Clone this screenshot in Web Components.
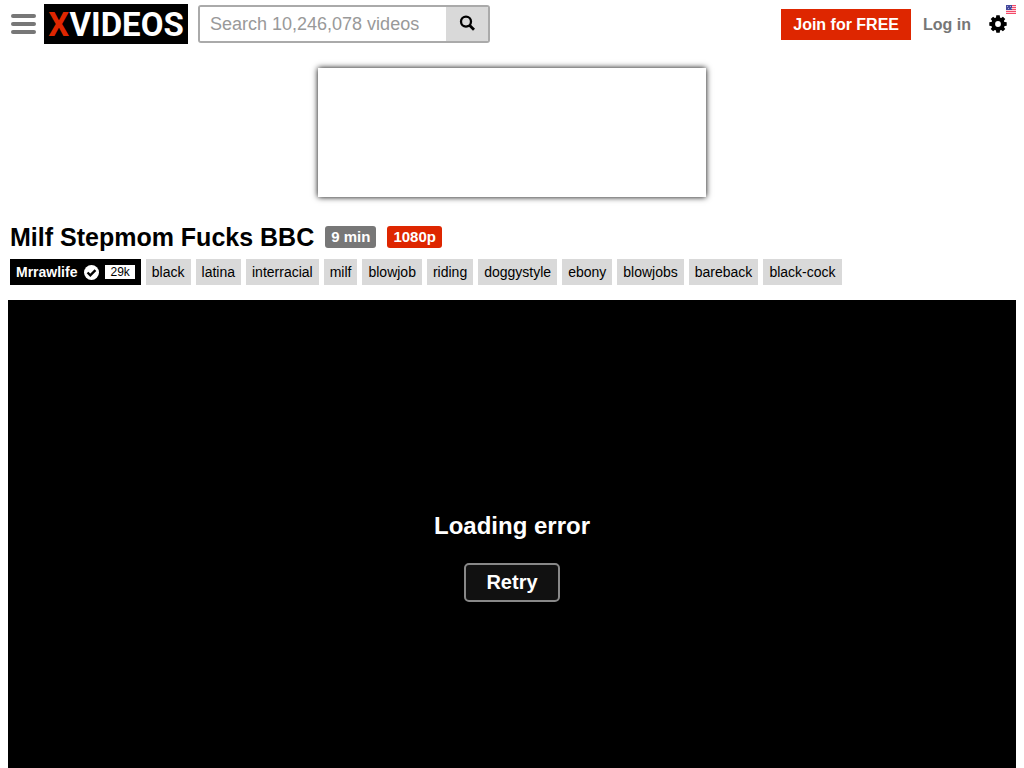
<!DOCTYPE html>
<html lang="en">
<head>
<meta charset="utf-8">
<meta name="viewport" content="width=device-width, initial-scale=1">
<title>Video page</title>
<style>
  body { margin: 0; background: #fff; color: #000; font-family: "Liberation Sans", Arial, sans-serif; }
</style>
</head>
<body>
<video-page></video-page>
<script>
const define = (name, html) => {
  const template = document.createElement("template");
  template.innerHTML = html;
  customElements.define(name, class extends HTMLElement {
    constructor() {
      super();
      this.attachShadow({ mode: "open" }).append(template.content.cloneNode(true));
    }
  });
};

define("site-logo", `
  <style>
    :host { display: block; }
    a { display: block; box-sizing: border-box; width: 144px; height: 40px; background: #000; color: #fff;
        font: bold 33px/42px Roboto, sans-serif; text-align: center; text-decoration: none; white-space: nowrap; }
    span { color: #de2600; }
  </style>
  <a href="#"><span>X</span>VIDEOS</a>`);

define("search-box", `
  <style>
    :host { display: block; }
    form { display: flex; box-sizing: border-box; width: 292px; height: 38px; border: 2px solid #aaa; border-radius: 3px; overflow: hidden; }
    input { flex: 1; min-width: 0; border: 0; padding: 0 10px; background: #fff; outline: 0; font: 18px "Liberation Sans", Arial, sans-serif; }
    input::placeholder { color: #999; opacity: 1; }
    button { display: flex; align-items: center; justify-content: center; width: 42px; border: 0; padding: 0 0 2px; background: #d9d9d9; }
  </style>
  <form>
    <input type="text" aria-label="Search" placeholder="Search 10,246,078 videos">
    <button type="button" aria-label="Search">
      <svg width="16" height="16" viewBox="0 0 16 16" fill="none" stroke="#000"><circle cx="7" cy="6.6" r="5" stroke-width="2.3"/><path d="M10.5 10.2 15 14.8" stroke-width="2.8"/></svg>
    </button>
  </form>`);

define("settings-menu", `
  <style>
    :host { display: block; position: relative; }
    button { display: block; border: 0; padding: 0; background: none; }
    svg { display: block; }
    .flag { position: absolute; top: -10px; right: -9px; }
  </style>
  <button type="button" aria-label="Settings">
    <svg width="18" height="18" viewBox="0 0 18 18">
      <path fill-rule="evenodd" d="M9 2.2a6.8 6.8 0 1 1 0 13.6A6.8 6.8 0 0 1 9 2.2Zm0 3.9a2.9 2.9 0 1 0 0 5.8 2.9 2.9 0 0 0 0-5.8Z"/>
      <path d="M7.3 .3h3.4l.5 3.5H6.8ZM7.3 17.7h3.4l.5-3.5H6.8ZM.3 7.3v3.4l3.5.5V6.8ZM17.7 7.3v3.4l-3.5.5V6.8ZM1.7 4.1l2.4-2.4 2.7 2.1-3 3ZM16.3 4.1l-2.4-2.4-2.7 2.1 3 3ZM1.7 13.9l2.4 2.4 2.7-2.1-3-3ZM16.3 13.9l-2.4 2.4-2.7-2.1 3-3Z"/>
    </svg>
  </button>
  <svg class="flag" width="10" height="9" viewBox="0 0 10 9"><path fill="#ffd5df" d="M0 0h10v9H0z"/><path fill="#f34b68" d="M0 0h10v1H0zM0 2h10v1H0zM0 4h10v1H0zM0 6h10v1H0zM0 8h10v1H0z"/><path fill="#454a9c" d="M0 0h6v5H0z"/><path fill="#a6a9d8" d="M1 1h1v1H1zM4 1h1v1H4zM2 3h1v1H2zM5 3h1v1H5z"/></svg>`);

define("site-header", `
  <style>
    :host { display: flex; align-items: center; height: 40px; padding: 4px 17px 4px 11px; }
    .menu { display: flex; flex-direction: column; gap: 4px; width: 25px; margin-right: 8px; border: 0; padding: 0; background: none; }
    .menu i { height: 4px; border-radius: 2px; background: #777; }
    search-box { margin-left: 10px; }
    nav { display: flex; align-items: center; margin-left: auto; font-size: 16px; font-weight: bold; line-height: 31px; white-space: nowrap; }
    a { text-decoration: none; color: #777; }
    .join { padding: 0 12px; background: #de2600; color: #fff; }
    .login { margin: 0 18px 0 12px; }
  </style>
  <button class="menu" type="button" aria-label="Menu"><i></i><i></i><i></i></button>
  <site-logo></site-logo>
  <search-box></search-box>
  <nav><a class="join" href="#">Join for FREE</a><a class="login" href="#">Log in</a><settings-menu></settings-menu></nav>`);

define("promo-frame", `
  <style>
    :host { display: block; width: 388px; max-width: 90%; height: 129px; margin: 20px auto 0; background: #fff; box-shadow: 0 0 6px #000; }
  </style>`);

define("title-badge", `
  <style>
    :host { display: block; padding: 0 6px; border-radius: 3px; background: var(--badge, #777); color: #fff; font-size: 15px; font-weight: bold; line-height: 22px; }
  </style>
  <slot></slot>`);

define("video-title", `
  <style>
    :host { display: flex; flex-wrap: wrap; align-items: center; gap: 11px; margin: 25px 10px 0; }
    h1 { margin: 0; font-size: 25px; line-height: 30px; }
    .quality { --badge: #de2600; }
  </style>
  <h1>Milf Stepmom Fucks BBC</h1>
  <title-badge>9 min</title-badge>
  <title-badge class="quality">1080p</title-badge>`);

define("tag-link", `
  <style>
    :host { display: block; }
    a { display: block; padding: 0 6px; background: #d9d9d9; color: #000; font-size: 14px; line-height: 26px; text-decoration: none; }
  </style>
  <a href="#"><slot></slot></a>`);

define("uploader-link", `
  <style>
    :host { display: block; }
    a { display: flex; align-items: center; padding: 0 6px; background: #000; color: #fff; font-size: 14px; font-weight: bold; line-height: 26px; text-decoration: none; }
    svg { margin: 0 6px 0 7px; }
    span { padding: 1px 5px 0; background: #fff; color: #000; font-size: 12px; font-weight: normal; line-height: 13px; }
  </style>
  <a href="#">Mrrawlife
    <svg width="15" height="15" viewBox="0 0 14 14"><circle cx="7" cy="7" r="7" fill="#fff"/><path d="m3.3 7 2.6 2.6 4.8-4.8" fill="none" stroke="#000" stroke-width="2.2"/></svg>
    <span>29k</span></a>`);

define("tag-list", `
  <style>
    :host { display: flex; flex-wrap: wrap; gap: 5px; margin: 7px 10px 15px; }
  </style>
  <uploader-link></uploader-link>
  <tag-link>black</tag-link><tag-link>latina</tag-link><tag-link>interracial</tag-link><tag-link>milf</tag-link>
  <tag-link>blowjob</tag-link><tag-link>riding</tag-link><tag-link>doggystyle</tag-link><tag-link>ebony</tag-link>
  <tag-link>blowjobs</tag-link><tag-link>bareback</tag-link><tag-link>black-cock</tag-link>`);

define("video-player", `
  <style>
    :host { display: flex; flex: 1; flex-direction: column; align-items: center; justify-content: center; gap: 23px;
            margin: 0 8px; padding-top: 46px; background: #000; color: #fff; }
    p { margin: 0; font-size: 24px; font-weight: bold; line-height: 28px; }
    button { height: 39px; border: 2px solid #888; border-radius: 5px; padding: 0 20px; background: #111; color: #fff; font: bold 20px "Liberation Sans", Arial, sans-serif; }
  </style>
  <p>Loading error</p>
  <button type="button">Retry</button>`);

define("video-page", `
  <style>
    :host { display: flex; flex-direction: column; min-height: 100vh; }
  </style>
  <site-header></site-header>
  <promo-frame></promo-frame>
  <video-title></video-title>
  <tag-list></tag-list>
  <video-player></video-player>`);
</script>
</body>
</html>
